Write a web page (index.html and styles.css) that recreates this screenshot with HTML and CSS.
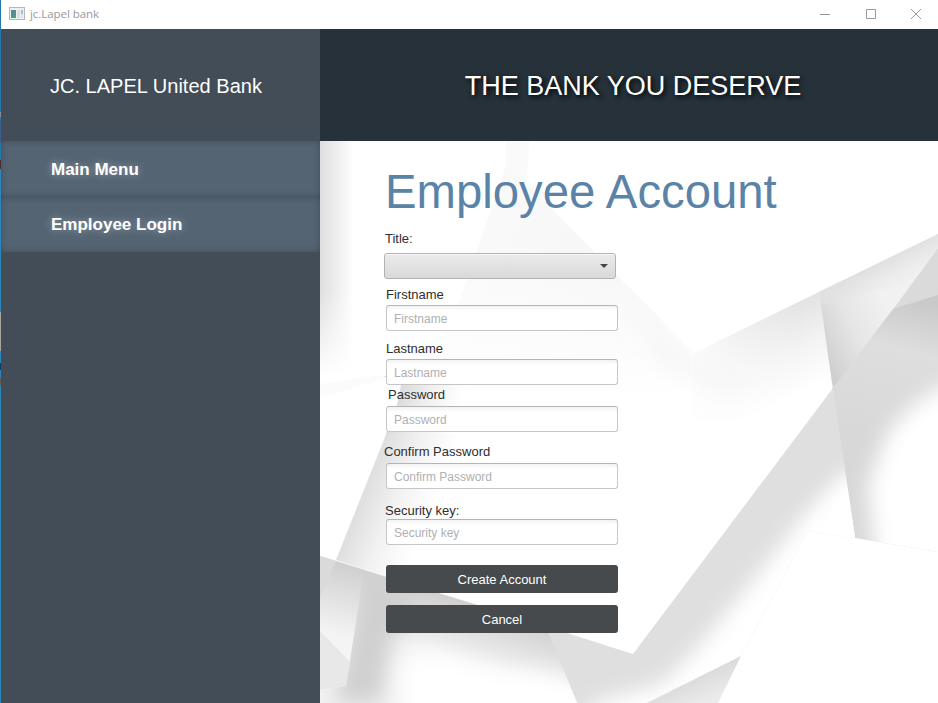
FILE: index.html
```html
<!DOCTYPE html>
<html lang="en">
<head>
<meta charset="utf-8">
<title>jc.Lapel bank</title>
<link rel="stylesheet" href="styles.css">
</head>
<body>
<div class="window">
  <header class="titlebar">
    <svg class="app-icon" width="16" height="14" viewBox="0 0 16 14">
      <defs><linearGradient id="ico" x1="0" y1="0" x2="0.4" y2="1"><stop offset="0" stop-color="#5a82a8"/><stop offset="1" stop-color="#48a080"/></linearGradient></defs>
      <rect x="0.5" y="0.5" width="15" height="12" fill="#eef0f1" stroke="#b4b8ba"/>
      <rect x="2" y="3" width="5" height="8" fill="url(#ico)"/>
      <rect x="8" y="3" width="3" height="8" fill="#dcdee0"/>
      <rect x="12" y="3" width="2" height="4" fill="#a5c3cf"/>
      <rect x="12" y="7" width="2" height="4" fill="#dfe3e5"/>
    </svg>
    <span class="window-title">jc.Lapel bank</span>
    <div class="controls">
      <svg width="12" height="12" viewBox="0 0 12 12"><path d="M1 6.5h10"/></svg>
      <svg width="12" height="12" viewBox="0 0 12 12"><path d="M1.500 1.500h9v9h-9z"/></svg>
      <svg width="12" height="12" viewBox="0 0 12 12"><path d="M1 1l10 10M11 1L1 11"/></svg>
    </div>
  </header>
  <div class="app">
    <aside class="sidebar">
      <div class="brand">JC. LAPEL United Bank</div>
      <nav>
        <a class="nav-item">Main Menu</a>
        <a class="nav-item">Employee Login</a>
      </nav>
    </aside>
    <section class="content">
      <div class="banner">THE BANK YOU DESERVE</div>
      <main class="pane">
        <svg class="backdrop" viewBox="320 141 618 562" preserveAspectRatio="none">
          <defs>
            <linearGradient id="edge" x1="0" x2="1" y1="0" y2="0"><stop offset="0" stop-color="#dedede"/><stop offset=".4" stop-color="#ebebeb"/><stop offset="1" stop-color="#fff"/></linearGradient>
            <linearGradient id="edgeFade" x1="0" x2="0" y1="0" y2="1"><stop offset="0" stop-color="#fff" stop-opacity="0"/><stop offset="1" stop-color="#fff"/></linearGradient>
            <linearGradient id="apex" gradientUnits="userSpaceOnUse" x1="485" y1="250" x2="610" y2="300"><stop offset="0" stop-color="#f9f9f9"/><stop offset="1" stop-color="#f6f6f6"/></linearGradient>
            <linearGradient id="apexFade" gradientUnits="userSpaceOnUse" x1="0" y1="240" x2="0" y2="400"><stop offset="0" stop-color="#fff" stop-opacity="0"/><stop offset="1" stop-color="#fff"/></linearGradient>
            <linearGradient id="fold" gradientUnits="userSpaceOnUse" x1="755" y1="321" x2="792" y2="398"><stop offset="0" stop-color="#e2e2e2"/><stop offset=".5" stop-color="#f3f3f3"/><stop offset="1" stop-color="#fff"/></linearGradient>
            <linearGradient id="foldLeft" gradientUnits="userSpaceOnUse" x1="690" y1="0" x2="800" y2="0"><stop offset="0" stop-color="#fff" stop-opacity=".9"/><stop offset="1" stop-color="#fff" stop-opacity="0"/></linearGradient>
            <linearGradient id="kite" gradientUnits="userSpaceOnUse" x1="822" y1="350" x2="892" y2="318"><stop offset="0" stop-color="#d0d0d0"/><stop offset=".5" stop-color="#e6e6e6"/><stop offset="1" stop-color="#f1f1f1"/></linearGradient>
            <linearGradient id="kiteTop" gradientUnits="userSpaceOnUse" x1="886" y1="260" x2="900" y2="287"><stop offset="0" stop-color="#e0e0e0"/><stop offset="1" stop-color="#e9e9e9" stop-opacity="0"/></linearGradient>
            <linearGradient id="cove" gradientUnits="userSpaceOnUse" x1="915" y1="300" x2="880" y2="440"><stop offset="0" stop-color="#c9c9c9"/><stop offset=".35" stop-color="#dedede"/><stop offset="1" stop-color="#d8d8d8"/></linearGradient>
            <linearGradient id="shard" gradientUnits="userSpaceOnUse" x1="693" y1="680" x2="703" y2="703"><stop offset="0" stop-color="#dcdcdc"/><stop offset="1" stop-color="#ebebeb"/></linearGradient>
            <linearGradient id="wing" gradientUnits="userSpaceOnUse" x1="353" y1="515" x2="418" y2="541"><stop offset="0" stop-color="#dedede"/><stop offset=".5" stop-color="#f2f2f2"/><stop offset="1" stop-color="#fff"/></linearGradient>
            <linearGradient id="wingTop" gradientUnits="userSpaceOnUse" x1="398" y1="385" x2="460" y2="405"><stop offset="0" stop-color="#d8d8d8"/><stop offset=".5" stop-color="#f0f0f0"/><stop offset="1" stop-color="#fff"/></linearGradient>
            <linearGradient id="corner" gradientUnits="userSpaceOnUse" x1="350" y1="565" x2="333" y2="635"><stop offset="0" stop-color="#cfcfcf"/><stop offset="1" stop-color="#f4f4f4"/></linearGradient>
            <linearGradient id="low" gradientUnits="userSpaceOnUse" x1="470" y1="603" x2="452" y2="660"><stop offset="0" stop-color="#d0d0d0"/><stop offset=".5" stop-color="#e2e2e2"/><stop offset="1" stop-color="#f2f2f2"/></linearGradient>
            <clipPath id="foldClip"><path d="M694 353L819 292L834 392L760 470H660L600 400L610 265Z"/></clipPath>
            <clipPath id="coveClip"><path d="M893 309L938 295V552L855 538L833 388Z"/></clipPath>
            <clipPath id="lowClip"><path d="M364 570L545 626L577 703H320V690L346 686Z"/></clipPath>
            <clipPath id="rampClip"><path d="M545 626L633 654L833 388L855 538L808 531L741 656L647 703H577Z"/></clipPath>
            <filter id="soft" x="-50%" y="-50%" width="200%" height="200%"><feGaussianBlur stdDeviation="10"/></filter>
          </defs>
          <rect x="320" y="141" width="618" height="562" fill="#fff"/>
          <rect x="320" y="141" width="34" height="235" fill="url(#edge)"/>
          <rect x="320" y="290" width="36" height="87" fill="url(#edgeFade)"/>
          <path d="M506 141L508 160L460 300L410 400H700L694 353L508 165Z" fill="url(#apex)"/>
          <path d="M400 240H712V410H400Z" fill="url(#apexFade)"/>
          <path d="M506 141H530L526 183L506 163Z" fill="#fafafa"/>
          <path d="M694 353L819 292L838 420H690Z" fill="url(#fold)"/>
          <path d="M690 353L819 292L838 420H690Z" fill="url(#foldLeft)"/>
          <g clip-path="url(#foldClip)"><path d="M620 285L694 362L760 372L725 394L660 365Z" fill="#f7f7f7" filter="url(#soft)"/></g>
          <path d="M819 292L938 234V252L833 390Z" fill="url(#kite)"/>
          <path d="M819 292L938 234V248L912 282L821 305Z" fill="url(#kiteTop)"/>
          <path d="M938 248V297L892 311Z" fill="#dadada"/>
          <path d="M893 309L938 295V552L855 538L832 389Z" fill="url(#cove)"/>
          <g clip-path="url(#coveClip)"><path d="M990 370Q920 385 886 436L868 485L876 570L990 610Z" fill="#fff" filter="url(#soft)"/></g>
          <g clip-path="url(#rampClip)">
            <path d="M530 380H870V703H530Z" fill="#dfdfdf"/>
            <path d="M900 445L842 475L802 518L752 582L700 645L662 684L625 694L590 705L580 740H900Z" fill="#fff" filter="url(#soft)"/>
            <path d="M900 490L850 490L830 512L812 545H900Z" fill="#fff" filter="url(#soft)"/>
          </g>
          <path d="M741 656L647 703H718Z" fill="url(#shard)"/>
          <path d="M387 432L336 560L450 598L510 432Z" fill="url(#wing)"/>
          <path d="M383 376L401 385L397 405L386 434H470V376Z" fill="url(#wingTop)"/>
          <path d="M320 384L384 375V378L320 398Z" fill="#fbfbfb"/>
          <path d="M320 556L365 570L347 686L320 690Z" fill="url(#corner)"/>
          <path d="M320 556L336 561L320 597Z" fill="#dadada"/>
          <path d="M320 631L349 661L347 686L320 690Z" fill="#e8e8e8"/>
          <path d="M364 570L545.500 626L577.500 703H320V690L346 686Z" fill="url(#low)"/>
          <g clip-path="url(#lowClip)">
            <path d="M364 560L335 703H380L392 640L420 600Z" fill="#d0d0d0" filter="url(#soft)"/>
            <path d="M400 668Q406 650 432 650L500 668L552 674L600 690V740H402Z" fill="#fff" filter="url(#soft)"/>
          </g>
        </svg>
        <form class="form">
          <h1>Employee Account</h1>
          <label class="l-title">Title:</label>
          <div class="combo"><i class="arrow"></i></div>
          <label class="l-first">Firstname</label>
          <input type="text" placeholder="Firstname">
          <label class="l-last">Lastname</label>
          <input type="text" placeholder="Lastname">
          <label class="l-pass">Password</label>
          <input type="password" placeholder="Password">
          <label class="l-confirm">Confirm Password</label>
          <input type="password" placeholder="Confirm Password">
          <label class="l-key">Security key:</label>
          <input type="text" placeholder="Security key">
          <button type="button" class="create">Create Account</button>
          <button type="button" class="cancel">Cancel</button>
        </form>
      </main>
    </section>
  </div>
</div>
</body>
</html>
```
FILE: styles.css
```css
* { box-sizing: border-box; }
body {
  margin: 0;
  overflow: hidden;
  font-family: "Liberation Sans", Arial, sans-serif;
}
.window {
  width: 938px;
  height: 703px;
  display: flex;
  flex-direction: column;
  padding-left: 1px;
  background: linear-gradient(#2577a8 112px, #8a8f93 112px 117px, #2577a8 117px 120px, #3b6090 120px 143px, #2577a8 143px 160px, #4a3030 160px 169px, #2b86bb 169px 312px, #a8a49e 312px 351px, #2b86bb 351px 363px, #1d3a5c 363px 370px, #2b86bb 370px 378px, #6b5a50 378px 386px, #2b86bb 386px);
}
.titlebar {
  height: 29px;
  flex: none;
  display: flex;
  align-items: center;
  padding: 0 16px 2px 8px;
  background: #fff;
}
.window-title {
  margin-left: 5px;
  font: 11.5px "Open Sans", sans-serif;
  letter-spacing: -0.05px;
  color: #999;
}
.controls {
  margin-left: auto;
  display: flex;
  gap: 33.5px;
}
.controls svg { fill: none; stroke: #999; stroke-width: 1; }
.app { flex: 1; display: flex; min-height: 0; }
.sidebar { width: 319px; background: #424d58; }
.brand {
  height: 112px;
  padding: 3px 0 0 49px;
  display: flex;
  align-items: center;
  font-size: 20.05px;
  color: #fff;
}
.nav-item {
  display: flex;
  align-items: center;
  height: 55.5px;
  padding: 2px 0 0 50px;
  font-size: 17px;
  font-weight: bold;
  color: #fff;
  background: #546473;
  border-radius: 3px;
  box-shadow: inset 0 0 6px rgba(35, 45, 55, .4);
  text-shadow: 0 0 8px rgba(255, 255, 255, .4);
}
.content { flex: 1; display: flex; flex-direction: column; }
.banner {
  height: 112px;
  flex: none;
  padding: 2px 0 0 8px;
  display: flex;
  align-items: center;
  justify-content: center;
  font-size: 27px;
  color: #fff;
  background: #263139;
  text-shadow: 2px 2px 5px #000;
}
.pane { position: relative; flex: 1; overflow: hidden; }
.backdrop { position: absolute; inset: 0; width: 100%; height: 100%; }
.form {
  position: relative;
  width: 298px;
  padding: 24px 0 0 66px;
  display: flex;
  flex-direction: column;
}
h1 {
  margin: 0 0 12px -1px;
  font-size: 47.3px;
  line-height: 54px;
  font-weight: normal;
  white-space: nowrap;
  color: #5a83a8;
}
label { font-size: 13px; line-height: 15px; color: #2e2e2e; }
.l-title { margin: 0 0 7px -1px; }
.l-first { margin: 8px 0 3px 0; }
.l-last { margin: 10px 0 3px 0; }
.l-pass { margin: 2px 0 4px 2px; }
.l-confirm { margin: 12px 0 4px -2px; }
.l-key { margin: 14px 0 1px -1px; }
.combo {
  width: 232px;
  height: 26px;
  margin-left: -2px;
  padding-right: 7px;
  display: flex;
  align-items: center;
  justify-content: flex-end;
  border: 1px solid #b3b3b3;
  border-radius: 3px;
  background: linear-gradient(#ebebeb, #d9d9d9);
  box-shadow: inset 0 1px 0 #f7f7f7;
}
.arrow {
  border: 4px solid transparent;
  border-top-color: #444;
  border-bottom: 0;
}
input {
  width: 232px;
  height: 26px;
  margin: 0;
  padding: 1px 7px 0;
  font: 12px "Liberation Sans", Arial, sans-serif;
  border: 1px solid #c6c6c6;
  border-top-color: #b5b5b5;
  border-radius: 3px;
  background: linear-gradient(#f2f2f2, #fff 5px);
}
input::placeholder { color: #b0b0b0; opacity: 1; }
button {
  width: 232px;
  height: 28px;
  padding: 1px 0 0;
  border: 0;
  border-radius: 3px;
  font: 13px "Liberation Sans", Arial, sans-serif;
  color: #fff;
  background: #474a4c;
}
.create { margin-top: 20px; }
.cancel { margin-top: 12px; }
```
